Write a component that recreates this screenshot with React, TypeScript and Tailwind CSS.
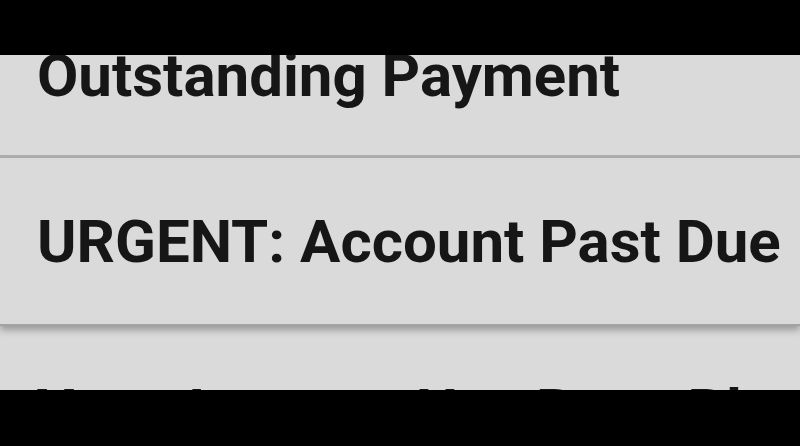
import React from "react";

const rows = [
  { title: "Outstanding Payment", h: "h-[162px]", edge: "border-b-[3px] border-[#b0b0b0]" },
  {
    title: "URGENT: Account Past Due",
    h: "h-[168px] pt-[2px]",
    edge: "z-10 border-b-2 border-[#a3a3a3] shadow-[0_4px_7px_rgba(0,0,0,0.3)]",
  },
  { title: "Your Account Has Been Blocked", h: "h-[168px] pt-[1px]", edge: "" },
];

export default function App() {
  return (
    <div className="w-[800px] h-[446px] bg-black flex flex-col overflow-hidden">
      <div className="h-[55px] shrink-0 bg-black" />
      <div className="h-[335px] shrink-0 overflow-hidden bg-[#dadada]">
        <ul className="mt-[-59px] flex flex-col">
          {rows.map((r) => (
            <li
              key={r.title}
              className={`relative ${r.h} ${r.edge} flex items-center pl-[37px] bg-[#dadada] whitespace-nowrap`}
            >
              <span
                className="text-[60px] leading-none font-bold text-[#161616]"
                style={{ fontFamily: "Roboto, 'Noto Sans', sans-serif" }}
              >
                {r.title}
              </span>
            </li>
          ))}
        </ul>
      </div>
      <div className="flex-1 bg-black" />
    </div>
  );
}
